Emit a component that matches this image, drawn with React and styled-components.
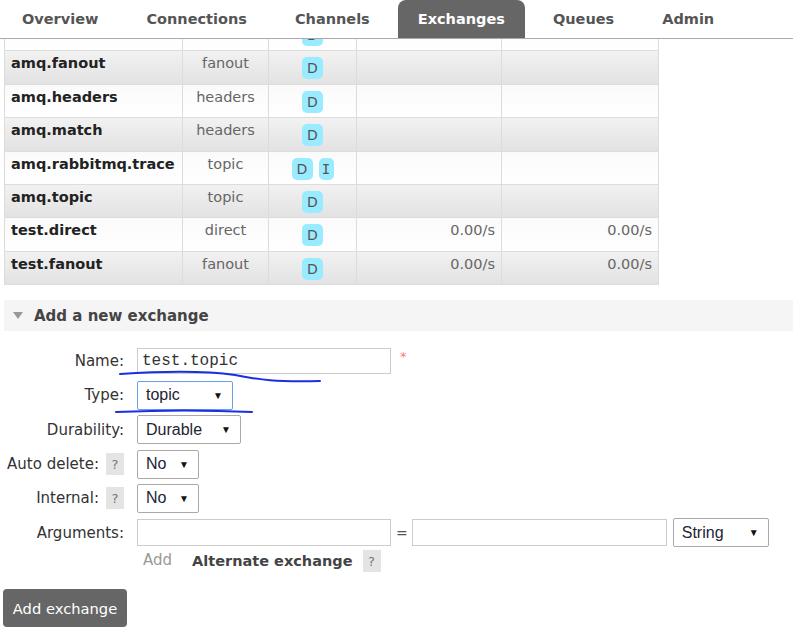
import React from "react";
import styled, { createGlobalStyle } from "styled-components";

const GlobalStyle = createGlobalStyle`
  html, body {
    margin: 0;
    padding: 0;
    background: #fff;
  }
  body {
    font-family: "DejaVu Sans", Verdana, sans-serif;
    color: #333;
  }
`;

const tabs = ["Overview", "Connections", "Channels", "Exchanges", "Queues", "Admin"];

// first row is scrolled mostly out of view, only its badge shows
const exchanges = [
  { name: "", type: "", features: ["D"] },
  { name: "amq.fanout", type: "fanout", features: ["D"] },
  { name: "amq.headers", type: "headers", features: ["D"] },
  { name: "amq.match", type: "headers", features: ["D"] },
  { name: "amq.rabbitmq.trace", type: "topic", features: ["D", "I"] },
  { name: "amq.topic", type: "topic", features: ["D"] },
  { name: "test.direct", type: "direct", features: ["D"], rateIn: "0.00/s", rateOut: "0.00/s" },
  { name: "test.fanout", type: "fanout", features: ["D"], rateIn: "0.00/s", rateOut: "0.00/s" },
];

const Page = styled.div`
  position: relative;
  width: 793px;
  height: 631px;
  overflow: hidden;
`;

const TabBar = styled.nav`
  display: flex;
  gap: 8px;
  height: 38px;
  padding-left: 2px;
  border-bottom: 1px solid #aaa;
`;

const Tab = styled.div`
  display: flex;
  align-items: center;
  padding: 0 20px;
  font-size: 14.5px;
  font-weight: bold;
  color: ${(p) => (p.$active ? "#fff" : "#555")};
  background: ${(p) => (p.$active ? "#666" : "transparent")};
  border-radius: 8px 8px 0 0;
`;

const TableClip = styled.div`
  height: 246px;
  overflow: hidden;
  padding-left: 4px;
`;

const Table = styled.table`
  border-collapse: collapse;
  margin-top: -22px;
  font-size: 14.5px;
`;

const Row = styled.tr`
  background: ${(p) =>
    p.$alt ? "linear-gradient(#f2f2f2, #e2e2e2)" : "linear-gradient(#fafafa, #fff)"};
`;

const Cell = styled.td`
  height: 33.4px;
  padding: 4px 6px 0;
  border: 1px solid #dcdcdc;
  box-sizing: border-box;
  width: ${(p) => p.$w}px;
  text-align: ${(p) => p.$align || "left"};
  vertical-align: top;
  font-weight: ${(p) => (p.$bold ? "bold" : "normal")};
  color: ${(p) => (p.$bold ? "#222" : "#666")};
  white-space: nowrap;
`;

const Badges = styled.div`
  display: flex;
  justify-content: center;
  gap: 6px;
  padding-top: 2px;
`;

const Badge = styled.span`
  display: inline-flex;
  align-items: center;
  justify-content: center;
  width: ${(p) => (p.$mono ? 15 : 21)}px;
  height: 22px;
  border-radius: 5px;
  background: #99ebff;
  color: #555;
  font-family: ${(p) => (p.$mono ? '"DejaVu Sans Mono", monospace' : "inherit")};
  font-size: 14px;
`;

const SectionHeader = styled.div`
  display: flex;
  align-items: center;
  gap: 11px;
  margin: 15px 0 0 4px;
  height: 31px;
  padding-left: 9px;
  background: #f5f5f5;
  font-size: 15px;
  font-weight: bold;
  color: #444;
`;

const Triangle = styled.span`
  width: 0;
  height: 0;
  border-left: 5px solid transparent;
  border-right: 5px solid transparent;
  border-top: 7px solid #999;
`;

const Form = styled.div`
  display: grid;
  grid-template-columns: 124px auto;
  column-gap: 13px;
  grid-auto-rows: 34.3px;
  padding-top: 13px;
  align-items: center;
`;

const Label = styled.div`
  display: flex;
  justify-content: flex-end;
  align-items: center;
  gap: 7px;
  font-size: 15px;
  color: #333;
  white-space: nowrap;
`;

const Help = styled.span`
  display: inline-flex;
  align-items: center;
  justify-content: center;
  flex: none;
  width: 18px;
  height: 22px;
  background: #e4e4e4;
  color: #777;
  font-size: 13px;
`;

const Field = styled.div`
  display: flex;
  align-items: center;
  gap: 6px;
`;

const TextBox = styled.div`
  width: ${(p) => p.$w}px;
  height: ${(p) => p.$h || 26}px;
  box-sizing: border-box;
  border: 1px solid #ccc;
  display: flex;
  align-items: center;
  padding-left: 4px;
  font-family: "Liberation Mono", "DejaVu Sans Mono", monospace;
  font-size: 16px;
  color: #333;
`;

const Required = styled.span`
  color: #f77;
  font-size: 13px;
  margin-left: 3px;
  align-self: flex-start;
  margin-top: 1px;
`;

const Select = styled.div`
  width: ${(p) => p.$w}px;
  height: 29px;
  box-sizing: border-box;
  border: 1px solid ${(p) => (p.$focus ? "#6c9ee8" : "#a9a9a9")};
  border-radius: 2px;
  display: flex;
  align-items: center;
  justify-content: space-between;
  padding: 0 9px 0 8px;
  font-family: "Liberation Sans", Arial, sans-serif;
  font-size: 16px;
  color: #1e2433;
  background: #fff;
`;

const Arrow = styled.span`
  font-size: 10px;
  color: #111;
`;

const Equals = styled.span`
  font-size: 14px;
  color: #555;
  margin: 0 -2px 0 -1px;
`;

const AddRow = styled.div`
  display: flex;
  align-items: center;
  padding-left: 6px;
  margin-top: -11px;
`;

const AddLink = styled.span`
  font-size: 15px;
  color: #999;
  margin-right: 20px;
  margin-top: -3px;
`;

const AltLabel = styled.span`
  font-size: 14.5px;
  font-weight: bold;
  color: #444;
  margin-right: 10px;
`;

const Button = styled.button`
  display: block;
  margin: 5px 0 0 3px;
  width: 124px;
  height: 38px;
  border: none;
  border-radius: 4px;
  background: #666;
  color: #fff;
  font-family: "DejaVu Sans", Verdana, sans-serif;
  font-size: 14.7px;
  padding: 0;
`;

const Scribble = styled.svg`
  position: absolute;
  left: 0;
  top: 0;
  pointer-events: none;
`;

const widths = [178, 86, 88, 145, 157];

function Dropdown({ value, w, focus }) {
  return (
    <Select $w={w} $focus={focus}>
      <span>{value}</span>
      <Arrow>▼</Arrow>
    </Select>
  );
}

export default function App() {
  return (
    <Page>
      <GlobalStyle />
      <TabBar>
        {tabs.map((t) => (
          <Tab key={t} $active={t === "Exchanges"}>
            {t}
          </Tab>
        ))}
      </TabBar>

      <TableClip>
        <Table>
          <tbody>
            {exchanges.map((x, i) => (
              <Row key={i} $alt={i % 2 === 1}>
                <Cell $w={widths[0]} $bold>
                  {x.name}
                </Cell>
                <Cell $w={widths[1]} $align="center">
                  {x.type}
                </Cell>
                <Cell $w={widths[2]}>
                  <Badges>
                    {x.features.map((f) => (
                      <Badge key={f} $mono={f === "I"}>
                        {f}
                      </Badge>
                    ))}
                  </Badges>
                </Cell>
                <Cell $w={widths[3]} $align="right">
                  {x.rateIn}
                </Cell>
                <Cell $w={widths[4]} $align="right">
                  {x.rateOut}
                </Cell>
              </Row>
            ))}
          </tbody>
        </Table>
      </TableClip>

      <SectionHeader>
        <Triangle />
        Add a new exchange
      </SectionHeader>

      <Form>
        <Label>Name:</Label>
        <Field>
          <TextBox $w={254}>test.topic</TextBox>
          <Required>*</Required>
        </Field>

        <Label>Type:</Label>
        <Field>
          <Dropdown value="topic" w={96} focus />
        </Field>

        <Label>Durability:</Label>
        <Field>
          <Dropdown value="Durable" w={104} />
        </Field>

        <Label>
          Auto delete: <Help>?</Help>
        </Label>
        <Field>
          <Dropdown value="No" w={62} />
        </Field>

        <Label>
          Internal: <Help>?</Help>
        </Label>
        <Field>
          <Dropdown value="No" w={62} />
        </Field>

        <Label>Arguments:</Label>
        <Field>
          <TextBox $w={254} $h={27} />
          <Equals>=</Equals>
          <TextBox $w={255} $h={27} />
          <Dropdown value="String" w={96} />
        </Field>

        <span />
        <AddRow>
          <AddLink>Add</AddLink>
          <AltLabel>Alternate exchange</AltLabel>
          <Help>?</Help>
        </AddRow>
      </Form>

      <Button>Add exchange</Button>

      <Scribble width="793" height="631" viewBox="0 0 793 631">
        <path
          d="M120 374 C 150 372, 200 370, 235 375 C 260 380, 275 382, 320 381"
          fill="none"
          stroke="#1a2fe0"
          strokeWidth="2"
          strokeLinecap="round"
        />
        <path
          d="M116 412 C 160 410, 210 410, 252 412"
          fill="none"
          stroke="#1a2fe0"
          strokeWidth="2"
          strokeLinecap="round"
        />
      </Scribble>
    </Page>
  );
}
